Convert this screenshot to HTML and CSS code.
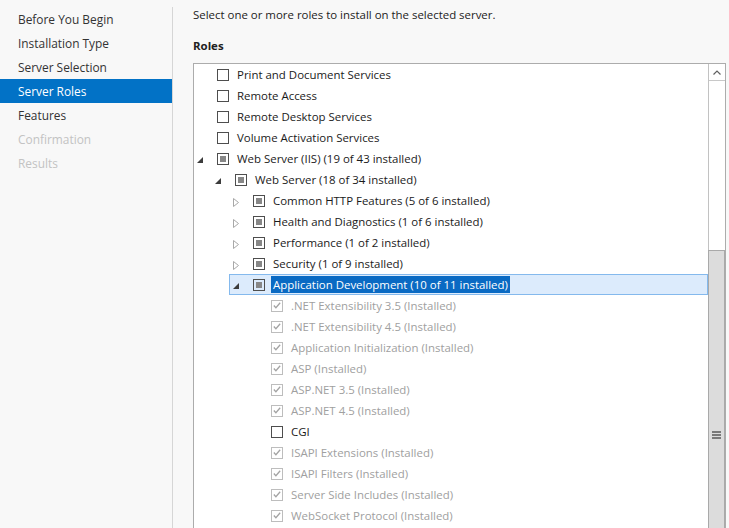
FILE: index.html
```html
<!DOCTYPE html>
<html lang="en">
<head>
<meta charset="utf-8">
<title>Server Roles</title>
<link rel="stylesheet" href="styles.css">
</head>
<body>
<nav class="steps">
  <div class="step">Before You Begin</div>
  <div class="step">Installation Type</div>
  <div class="step">Server Selection</div>
  <div class="step active">Server Roles</div>
  <div class="step">Features</div>
  <div class="step disabled">Confirmation</div>
  <div class="step disabled">Results</div>
</nav>
<main class="content">
  <p class="intro">Select one or more roles to install on the selected server.</p>
  <h2 class="section-title">Roles</h2>
  <div class="tree-box">
    <div class="tree">
      <div class="row lvl0"><div class="item"><span class="exp"></span><span class="cb"></span><span class="label">Print and Document Services</span></div></div>
      <div class="row lvl0"><div class="item"><span class="exp"></span><span class="cb"></span><span class="label">Remote Access</span></div></div>
      <div class="row lvl0"><div class="item"><span class="exp"></span><span class="cb"></span><span class="label">Remote Desktop Services</span></div></div>
      <div class="row lvl0"><div class="item"><span class="exp"></span><span class="cb"></span><span class="label">Volume Activation Services</span></div></div>
      <div class="row lvl0"><div class="item"><span class="exp"><svg width="6" height="6" viewBox="0 0 6 6"><polygon points="6,0 6,6 0,6" fill="#3c3c3c"/></svg></span><span class="cb ind"></span><span class="label">Web Server (IIS) (19 of 43 installed)</span></div></div>
      <div class="row lvl1"><div class="item"><span class="exp"><svg width="6" height="6" viewBox="0 0 6 6"><polygon points="6,0 6,6 0,6" fill="#3c3c3c"/></svg></span><span class="cb ind"></span><span class="label">Web Server (18 of 34 installed)</span></div></div>
      <div class="row lvl2"><div class="item"><span class="exp"><svg class="col" width="6" height="9" viewBox="0 0 6 9"><polygon points="0.5,0.5 5.5,4.5 0.5,8.5" fill="none" stroke="#a8a8a8" stroke-width="1"/></svg></span><span class="cb ind"></span><span class="label">Common HTTP Features (5 of 6 installed)</span></div></div>
      <div class="row lvl2"><div class="item"><span class="exp"><svg class="col" width="6" height="9" viewBox="0 0 6 9"><polygon points="0.5,0.5 5.5,4.5 0.5,8.5" fill="none" stroke="#a8a8a8" stroke-width="1"/></svg></span><span class="cb ind"></span><span class="label">Health and Diagnostics (1 of 6 installed)</span></div></div>
      <div class="row lvl2"><div class="item"><span class="exp"><svg class="col" width="6" height="9" viewBox="0 0 6 9"><polygon points="0.5,0.5 5.5,4.5 0.5,8.5" fill="none" stroke="#a8a8a8" stroke-width="1"/></svg></span><span class="cb ind"></span><span class="label">Performance (1 of 2 installed)</span></div></div>
      <div class="row lvl2"><div class="item"><span class="exp"><svg class="col" width="6" height="9" viewBox="0 0 6 9"><polygon points="0.5,0.5 5.5,4.5 0.5,8.5" fill="none" stroke="#a8a8a8" stroke-width="1"/></svg></span><span class="cb ind"></span><span class="label">Security (1 of 9 installed)</span></div></div>
      <div class="row lvl2"><div class="item selected"><span class="exp"><svg width="6" height="6" viewBox="0 0 6 6"><polygon points="6,0 6,6 0,6" fill="#3c3c3c"/></svg></span><span class="cb ind"></span><span class="label">Application Development (10 of 11 installed)</span></div></div>
      <div class="row lvl3"><div class="item"><span class="exp"></span><span class="cb chk"><svg width="11" height="11" viewBox="0 0 11 11"><polyline points="2,5.5 4.3,8 9,2.5" fill="none" stroke="#a3a3a3" stroke-width="1.4"/></svg></span><span class="label off">.NET Extensibility 3.5 (Installed)</span></div></div>
      <div class="row lvl3"><div class="item"><span class="exp"></span><span class="cb chk"><svg width="11" height="11" viewBox="0 0 11 11"><polyline points="2,5.5 4.3,8 9,2.5" fill="none" stroke="#a3a3a3" stroke-width="1.4"/></svg></span><span class="label off">.NET Extensibility 4.5 (Installed)</span></div></div>
      <div class="row lvl3"><div class="item"><span class="exp"></span><span class="cb chk"><svg width="11" height="11" viewBox="0 0 11 11"><polyline points="2,5.5 4.3,8 9,2.5" fill="none" stroke="#a3a3a3" stroke-width="1.4"/></svg></span><span class="label off">Application Initialization (Installed)</span></div></div>
      <div class="row lvl3"><div class="item"><span class="exp"></span><span class="cb chk"><svg width="11" height="11" viewBox="0 0 11 11"><polyline points="2,5.5 4.3,8 9,2.5" fill="none" stroke="#a3a3a3" stroke-width="1.4"/></svg></span><span class="label off">ASP (Installed)</span></div></div>
      <div class="row lvl3"><div class="item"><span class="exp"></span><span class="cb chk"><svg width="11" height="11" viewBox="0 0 11 11"><polyline points="2,5.5 4.3,8 9,2.5" fill="none" stroke="#a3a3a3" stroke-width="1.4"/></svg></span><span class="label off">ASP.NET 3.5 (Installed)</span></div></div>
      <div class="row lvl3"><div class="item"><span class="exp"></span><span class="cb chk"><svg width="11" height="11" viewBox="0 0 11 11"><polyline points="2,5.5 4.3,8 9,2.5" fill="none" stroke="#a3a3a3" stroke-width="1.4"/></svg></span><span class="label off">ASP.NET 4.5 (Installed)</span></div></div>
      <div class="row lvl3"><div class="item"><span class="exp"></span><span class="cb"></span><span class="label">CGI</span></div></div>
      <div class="row lvl3"><div class="item"><span class="exp"></span><span class="cb chk"><svg width="11" height="11" viewBox="0 0 11 11"><polyline points="2,5.5 4.3,8 9,2.5" fill="none" stroke="#a3a3a3" stroke-width="1.4"/></svg></span><span class="label off">ISAPI Extensions (Installed)</span></div></div>
      <div class="row lvl3"><div class="item"><span class="exp"></span><span class="cb chk"><svg width="11" height="11" viewBox="0 0 11 11"><polyline points="2,5.5 4.3,8 9,2.5" fill="none" stroke="#a3a3a3" stroke-width="1.4"/></svg></span><span class="label off">ISAPI Filters (Installed)</span></div></div>
      <div class="row lvl3"><div class="item"><span class="exp"></span><span class="cb chk"><svg width="11" height="11" viewBox="0 0 11 11"><polyline points="2,5.5 4.3,8 9,2.5" fill="none" stroke="#a3a3a3" stroke-width="1.4"/></svg></span><span class="label off">Server Side Includes (Installed)</span></div></div>
      <div class="row lvl3"><div class="item"><span class="exp"></span><span class="cb chk"><svg width="11" height="11" viewBox="0 0 11 11"><polyline points="2,5.5 4.3,8 9,2.5" fill="none" stroke="#a3a3a3" stroke-width="1.4"/></svg></span><span class="label off">WebSocket Protocol (Installed)</span></div></div>
    </div>
    <div class="scrollbar">
      <div class="sb-up"><svg width="8" height="5" viewBox="0 0 8 5"><polyline points="0.5,4.5 4,1 7.5,4.5" fill="none" stroke="#606060" stroke-width="1.2"/></svg></div>
      <div class="sb-track"></div>
      <div class="sb-thumb"><svg width="9" height="8" viewBox="0 0 9 8"><rect x="0" y="0" width="9" height="2" fill="#7a7a7a"/><rect x="0" y="3" width="9" height="2" fill="#7a7a7a"/><rect x="0" y="6" width="9" height="2" fill="#7a7a7a"/></svg></div>
    </div>
  </div>
</main>
</body>
</html>
```
FILE: styles.css
```css
html, body {
  margin: 0;
  height: 528px;
  overflow: hidden;
}
body {
  display: flex;
  align-items: flex-start;
  padding-top: 7px;
  box-sizing: border-box;
  background: #f8f8f8;
  font-family: "Open Sans", "Noto Sans", sans-serif;
  font-size: 11.45px;
  color: #1a1a1a;
}
.steps {
  width: 172px;
  flex: none;
  border-right: 1px solid #d6d6d6;
  height: 540px;
  font-size: 11.9px;
}
.step {
  height: 24px;
  line-height: 23px;
  padding-top: 1px;
  box-sizing: border-box;
  padding-left: 18px;
  color: #333;
}
.step.active {
  background: #0272c6;
  color: #fff;
}
.step.disabled {
  color: #c3c3c3;
}
.content {
  flex: 1;
  margin-left: 20px;
  padding-right: 3px;
  min-width: 0;
}
.intro {
  margin: 0;
  line-height: 16px;
  color: #222;
}
.section-title {
  margin: 15px 0 9px;
  font-size: 11.45px;
  font-weight: 700;
  line-height: 16px;
  color: #222;
}
.tree-box {
  display: flex;
  border: 1px solid #acacac;
  background: #fff;
  height: 560px;
}
.tree {
  flex: 1;
  min-width: 0;
}
.row {
  height: 21px;
  display: flex;
}
.lvl0 { padding-left: 0; }
.lvl1 { padding-left: 18px; }
.lvl2 { padding-left: 36px; }
.lvl3 { padding-left: 54px; }
.item {
  flex: 1;
  display: flex;
  align-items: center;
  height: 21px;
}
.item.selected {
  background: #dcebfc;
  box-shadow: inset 0 0 0 1px #84b9ed;
  margin-left: -1px;
  padding-left: 1px;
}
.exp {
  width: 23px;
  padding-left: 3px;
  flex: none;
  display: flex;
  align-items: center;
  height: 21px;
  padding-top: 2px;
  box-sizing: border-box;
}
.exp .col {
  margin-top: 1px;
}
.cb {
  flex: none;
  width: 12px;
  height: 12px;
  border: 1px solid #4e4e4e;
  box-sizing: border-box;
  display: flex;
  align-items: center;
  justify-content: center;
}
.cb.ind::after {
  content: "";
  width: 6px;
  height: 6px;
  background: #878787;
}
.cb.chk {
  border-color: #bdbdbd;
}
.label {
  margin-left: 6px;
  padding: 0 2px;
  line-height: 17px;
  white-space: nowrap;
}
.selected .label {
  background: #0a6ac3;
  color: #fff;
}
.label.off {
  color: #a0a0a0;
}
.scrollbar {
  width: 16px;
  flex: none;
  border-left: 1px solid #c2c2c2;
  display: flex;
  flex-direction: column;
  background: #fff;
}
.sb-up {
  height: 17px;
  border-bottom: 1px solid #c8c8c8;
  box-sizing: border-box;
  display: flex;
  align-items: center;
  justify-content: center;
}
.sb-track {
  height: 169px;
}
.sb-thumb {
  height: 368px;
  background: #dcdcdc;
  border: 1px solid #a9a9a9;
  border-width: 1px 1px 0 1px;
  margin-left: -1px;
  display: flex;
  align-items: center;
  justify-content: center;
}
```
